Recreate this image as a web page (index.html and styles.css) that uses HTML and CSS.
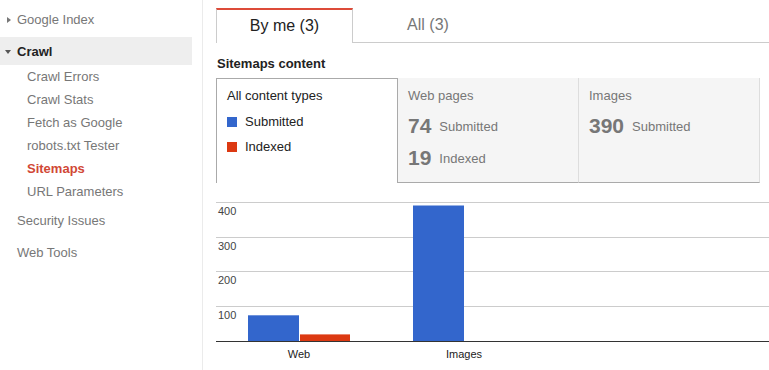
FILE: index.html
```html
<!DOCTYPE html>
<html>
<head>
<meta charset="utf-8">
<link rel="stylesheet" href="styles.css">
</head>
<body>
<div class="page">
  <nav class="sidebar">
    <div class="nav-item top"><span class="tri-right"></span>Google Index</div>
    <div class="nav-item crawl"><span class="tri-down"></span>Crawl</div>
    <ul class="sub">
      <li>Crawl Errors</li>
      <li>Crawl Stats</li>
      <li>Fetch as Google</li>
      <li>robots.txt Tester</li>
      <li class="active">Sitemaps</li>
      <li>URL Parameters</li>
    </ul>
    <div class="nav-item plain">Security Issues</div>
    <div class="nav-item plain">Web Tools</div>
  </nav>
  <main class="main">
    <div class="tabs">
      <div class="tab selected">By me (3)</div>
      <div class="tab">All (3)</div>
    </div>
    <h2 class="heading">Sitemaps content</h2>
    <div class="cards">
      <div class="card first">
        <div class="card-title dark">All content types</div>
        <div class="legend">
          <div class="legend-row"><span class="sw blue"></span>Submitted</div>
          <div class="legend-row"><span class="sw red"></span>Indexed</div>
        </div>
      </div>
      <div class="card gray">
        <div class="card-title">Web pages</div>
        <div class="stats">
          <div class="stat"><b>74</b>Submitted</div>
          <div class="stat"><b>19</b>Indexed</div>
        </div>
      </div>
      <div class="card gray">
        <div class="card-title">Images</div>
        <div class="stats">
          <div class="stat"><b>390</b>Submitted</div>
        </div>
      </div>
    </div>
    <div class="chart">
      <svg width="553" height="186" viewBox="0 0 553 186">
        <g stroke="#cccccc" stroke-width="1">
          <line x1="0" y1="19.5" x2="553" y2="19.5"/>
          <line x1="0" y1="54.5" x2="553" y2="54.5"/>
          <line x1="0" y1="88.5" x2="553" y2="88.5"/>
          <line x1="0" y1="123.5" x2="553" y2="123.5"/>
        </g>
        <g font-family="Liberation Sans, Arial, sans-serif" font-size="11" fill="#444">
          <text x="2" y="32">400</text>
          <text x="2" y="67">300</text>
          <text x="2" y="101">200</text>
          <text x="2" y="136">100</text>
        </g>
        <rect x="32" y="132.3" width="51" height="25.7" fill="#3366cc"/>
        <rect x="84" y="151.4" width="50" height="6.6" fill="#dc3912"/>
        <rect x="197" y="22.5" width="51" height="135.5" fill="#3366cc"/>
        <line x1="0" y1="158.5" x2="553" y2="158.5" stroke="#333" stroke-width="1"/>
        <g font-family="Liberation Sans, Arial, sans-serif" font-size="11" fill="#222" text-anchor="middle">
          <text x="83" y="175">Web</text>
          <text x="248" y="175">Images</text>
        </g>
      </svg>
    </div>
  </main>
</div>
</body>
</html>
```

FILE: styles.css
```css
html, body {
  margin: 0;
  padding: 0;
  background: #ffffff;
}
body {
  font-family: "Liberation Sans", Arial, sans-serif;
  font-size: 13px;
  color: #222;
}
.page {
  display: flex;
  width: 769px;
  height: 370px;
  overflow: hidden;
}
.sidebar {
  width: 202px;
  flex: none;
  border-right: 1px solid #ebebeb;
  padding-top: 8px;
  box-sizing: content-box;
}
.nav-item {
  color: #777;
  height: 24px;
  line-height: 24px;
  padding-left: 17px;
  position: relative;
  width: 175px;
}
.nav-item.top {
  margin-bottom: 5px;
}
.nav-item.crawl {
  background: #eeeeee;
  color: #222;
  font-weight: bold;
  height: 28px;
  line-height: 29px;
}
.tri-right {
  position: absolute;
  left: 7px;
  top: 9px;
  width: 0;
  height: 0;
  border-top: 3.5px solid transparent;
  border-bottom: 3.5px solid transparent;
  border-left: 4px solid #777;
}
.tri-down {
  position: absolute;
  left: 5px;
  top: 13px;
  width: 0;
  height: 0;
  border-left: 3.5px solid transparent;
  border-right: 3.5px solid transparent;
  border-top: 4px solid #555;
}
.sub {
  list-style: none;
  margin: 0;
  padding: 0 0 0 27px;
}
.sub li {
  color: #777;
  line-height: 23px;
  height: 23px;
}
.sub li.active {
  color: #d14836;
  font-weight: bold;
}
.nav-item.plain {
  height: 32px;
  line-height: 32px;
}
.sub + .nav-item.plain {
  margin-top: 2px;
}
.main {
  flex: 1;
  padding-left: 13px;
}
.tabs {
  display: flex;
  margin-top: 8px;
  border-bottom: 1px solid #cccccc;
  height: 34px;
}
.tab {
  width: 150px;
  text-align: center;
  font-size: 16px;
  color: #777;
  line-height: 34px;
  height: 34px;
}
.tab.selected {
  width: 135px;
  color: #222;
  background: #fff;
  border-top: 2px solid #dd4b39;
  border-left: 1px solid #cccccc;
  border-right: 1px solid #cccccc;
  height: 33px;
  line-height: 32px;
  margin-bottom: -1px;
}
.heading {
  margin: 13px 0 6px 1px;
  font-size: 13px;
  font-weight: bold;
  line-height: 16px;
  color: #222;
}
.cards {
  display: flex;
  height: 105px;
}
.card {
  width: 181px;
  box-sizing: border-box;
  padding-left: 10px;
  flex: none;
}
.card.first {
  width: 182px;
  background: #fff;
  border: 1px solid #aaaaaa;
  border-bottom: none;
}
.card.gray {
  background: #f5f5f5;
  border-right: 1px solid #dddddd;
  border-bottom: 1px solid #aaaaaa;
  padding-top: 1px;
}
.card-title {
  padding-top: 8px;
  line-height: 18px;
  color: #777;
}
.card-title.dark {
  color: #222;
}
.legend {
  margin-top: 4px;
}
.legend-row {
  display: flex;
  align-items: center;
  height: 25px;
  color: #222;
}
.sw {
  width: 10px;
  height: 10px;
  margin-right: 8px;
}
.sw.blue {
  background: #3366cc;
}
.sw.red {
  background: #dc3912;
}
.stats {
  margin-top: 5px;
}
.stat {
  height: 32px;
  display: flex;
  align-items: center;
  color: #777;
}
.stat b {
  font-size: 21px;
  font-weight: bold;
  margin-right: 8px;
}
.chart {
  height: 186px;
}
.chart svg {
  display: block;
}
```
